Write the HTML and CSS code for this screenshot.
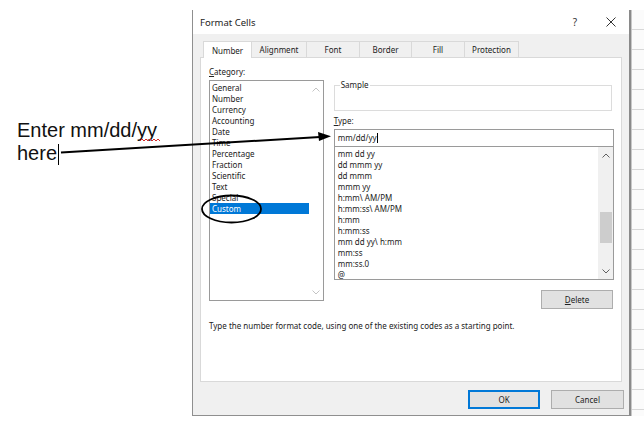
FILE: index.html
```html
<!DOCTYPE html>
<html lang="en">
  <head>
    <meta charset="UTF-8" />
    <title>Format Cells</title>
    <link rel="stylesheet" href="styles.css">
  </head>
  <body>
    <div class="screen">
      <div class="note">
        <p>Enter mm/dd/<span class="squiggle">yy</span><br />here<span class="caret"></span></p>
      </div>

      <div class="dialog">
        <div class="titlebar">
          <span class="title">Format Cells</span>
          <span class="help">?</span>
          <svg class="close" width="10" height="10" viewBox="0 0 10 10">
            <path d="M0.5 0.5 L9.5 9.5 M9.5 0.5 L0.5 9.5" stroke="#333" stroke-width="1" fill="none" />
          </svg>
        </div>

        <div class="body">
          <div class="tabs">
            <div class="tab active">Number</div>
            <div class="tab">Alignment</div>
            <div class="tab">Font</div>
            <div class="tab">Border</div>
            <div class="tab">Fill</div>
            <div class="tab">Protection</div>
          </div>

          <div class="panel">
            <div class="columns">
              <div class="cat-col">
                <div class="label"><u>C</u>ategory:</div>
                <div class="listbox cat-list">
                  <ul>
                    <li>General</li>
                    <li>Number</li>
                    <li>Currency</li>
                    <li>Accounting</li>
                    <li>Date</li>
                    <li>Time</li>
                    <li>Percentage</li>
                    <li>Fraction</li>
                    <li>Scientific</li>
                    <li>Text</li>
                    <li>Special</li>
                    <li class="selected">Custom</li>
                  </ul>
                  <div class="scroll plain">
                    <svg width="8" height="5" viewBox="0 0 8 5"><path d="M0.5 4.5 L4 1 L7.5 4.5" stroke="#c4c4c4" fill="none" /></svg>
                    <svg width="8" height="5" viewBox="0 0 8 5"><path d="M0.5 0.5 L4 4 L7.5 0.5" stroke="#c4c4c4" fill="none" /></svg>
                  </div>
                </div>
              </div>

              <div class="type-col">
                <div class="sample">
                  <span class="legend">Sample</span>
                </div>
                <div class="label"><u>T</u>ype:</div>
                <div class="type-input">mm/dd/yy<span class="text-caret"></span></div>
                <div class="listbox type-list">
                  <ul>
                    <li>mm dd yy</li>
                    <li>dd mmm yy</li>
                    <li>dd mmm</li>
                    <li>mmm yy</li>
                    <li>h:mm\ AM/PM</li>
                    <li>h:mm:ss\ AM/PM</li>
                    <li>h:mm</li>
                    <li>h:mm:ss</li>
                    <li>mm dd yy\ h:mm</li>
                    <li>mm:ss</li>
                    <li>mm:ss.0</li>
                    <li>@</li>
                  </ul>
                  <div class="scroll">
                    <div class="arrow">
                      <svg width="8" height="5" viewBox="0 0 8 5"><path d="M0.5 4.5 L4 1 L7.5 4.5" stroke="#606060" fill="none" /></svg>
                    </div>
                    <div class="track"><div class="thumb"></div></div>
                    <div class="arrow">
                      <svg width="8" height="5" viewBox="0 0 8 5"><path d="M0.5 0.5 L4 4 L7.5 0.5" stroke="#606060" fill="none" /></svg>
                    </div>
                  </div>
                </div>
                <div class="actions">
                  <button class="btn"><u>D</u>elete</button>
                </div>
              </div>
            </div>
            <p class="hint">Type the number format code, using one of the existing codes as a starting point.</p>
          </div>

          <div class="footer">
            <button class="btn primary">OK</button>
            <button class="btn">Cancel</button>
          </div>
        </div>
      </div>

      <div class="sheet"></div>

      <!-- hand-drawn annotations on top of the screenshot -->
      <svg class="marks" width="644" height="431" viewBox="0 0 644 431">
        <path d="M140 141 l2 -2 l2 2 l2 -2 l2 2 l2 -2 l2 2 l2 -2 l2 2 l2 -2 l2 2" stroke="#d42a2a" stroke-width="1" fill="none" />
        <line x1="61" y1="152.5" x2="320" y2="137" stroke="#000" stroke-width="2" />
        <path d="M331 136.3 L318 132 L319 141 Z" fill="#000" />
        <ellipse cx="231.5" cy="209" rx="29.5" ry="13.5" stroke="#000" stroke-width="1.8" fill="none" />
      </svg>
    </div>
  </body>
</html>
```

FILE: styles.css
```css
* {
  box-sizing: border-box;
}

body {
  margin: 0;
  background: #fff;
  font-family: "Noto Sans", "Open Sans", sans-serif;
  font-size: 8px;
  color: #222;
}

.screen {
  position: relative;
  display: flex;
  width: 644px;
  height: 431px;
  overflow: hidden;
}

/* left note */
.note {
  width: 192px;
  padding: 119px 0 0 17px;
}

.note p {
  margin: 0;
  font-family: "Liberation Sans", Arial, sans-serif;
  font-size: 20px;
  line-height: 23px;
  color: #111;
}

.caret {
  display: inline-block;
  width: 1px;
  height: 21px;
  margin-left: 1px;
  vertical-align: -5px;
  background: #000;
}

/* dialog */
.dialog {
  display: flex;
  flex-direction: column;
  width: 439px;
  height: 406px;
  margin-top: 10px;
  border-left: 1px solid #8f8f8f;
  border-right: 2px solid #8a8a8a;
  border-bottom: 1px solid #8f8f8f;
  background: #f0f0f0;
}

.titlebar {
  display: flex;
  align-items: center;
  height: 24px;
  padding: 0 13px 0 7px;
  background: #fff;
  font-size: 9.5px;
  color: #222;
}

.title {
  flex: 1;
}

.help {
  margin-right: 29px;
  font-size: 10px;
  color: #333;
}

.body {
  flex: 1;
  display: flex;
  flex-direction: column;
  padding: 6px 7px 0 7px;
}

.tabs {
  display: flex;
  height: 17px;
  margin-left: 3px;
}

.tab {
  display: flex;
  align-items: center;
  justify-content: center;
  width: 54px;
  margin-top: 1px;
  border: 1px solid #d9d9d9;
  border-left: none;
  border-bottom: none;
  color: #222;
}

.tab.active {
  width: 49px;
  margin-top: 0;
  border-left: 1px solid #d9d9d9;
  background: #fff;
  position: relative;
  top: 1px;
}

.tab:nth-child(2) { width: 55px; }
.tab:nth-child(3) { width: 53px; }
.tab:nth-child(4) { width: 52px; }
.tab:nth-child(5) { width: 53px; }

.panel {
  height: 325px;
  padding: 8px 7px 0 8px;
  background: #fff;
  border: 1px solid #d9d9d9;
}

.columns {
  display: flex;
  gap: 10px;
}

.label {
  height: 12px;
  line-height: 12px;
  margin-bottom: 2px;
}

.cat-col {
  width: 115px;
}

.listbox {
  display: flex;
  border: 1px solid #9a9a9a;
  background: #fff;
}

.listbox ul {
  flex: 1;
  margin: 0;
  padding: 1px 0 0;
  list-style: none;
}

.listbox li {
  height: 11px;
  line-height: 11px;
  padding-left: 2px;
  white-space: nowrap;
}

.cat-list {
  height: 221px;
}

.cat-list li.selected {
  background: #0078d7;
  color: #fff;
}

.scroll {
  display: flex;
  flex-direction: column;
  width: 14px;
}

.scroll.plain {
  justify-content: space-between;
  align-items: center;
  padding: 6px 0 5px;
}

.type-col {
  width: 281px;
}

.sample {
  position: relative;
  height: 26px;
  margin: 19px 2px 4px 0;
  border: 1px solid #dcdcdc;
}

.legend {
  position: absolute;
  top: -7px;
  left: 5px;
  padding: 0 1px;
  background: #fff;
  line-height: 12px;
}

.type-input {
  height: 17px;
  padding-left: 3px;
  line-height: 15px;
  border: 1px solid #9a9a9a;
  border-bottom: none;
}

.text-caret {
  display: inline-block;
  width: 1px;
  height: 10px;
  vertical-align: -2px;
  background: #000;
}

.type-list {
  height: 134px;
}

.type-list ul {
  padding-left: 1px;
}

.type-list .scroll {
  width: 15px;
  background: #f0f0f0;
}

.arrow {
  display: flex;
  align-items: center;
  justify-content: center;
  height: 16px;
}

.track {
  flex: 1;
  padding: 49px 1px 0 2px;
}

.thumb {
  height: 31px;
  background: #cdcdcd;
}

.actions {
  display: flex;
  justify-content: flex-end;
  margin: 10px 1px 0 0;
}

.btn {
  width: 72px;
  height: 19px;
  padding: 0;
  border: 1px solid #adadad;
  background: #e1e1e1;
  font-family: inherit;
  font-size: 8px;
  color: #222;
}

.hint {
  margin: 11px 0 0 0;
  line-height: 11px;
}

.footer {
  display: flex;
  justify-content: flex-end;
  gap: 11px;
  margin-right: -2px;
  padding-top: 8px;
}

.footer .btn {
  width: 73px;
}

.btn.primary {
  width: 72px;
  border: 1px solid #0078d7;
  box-shadow: inset 0 0 0 1px #0078d7;
}

/* spreadsheet peeking out on the right */
.sheet {
  flex: 1;
  margin-top: 10px;
  height: 406px;
  border-left: 1px solid #c8c8c8;
  background: repeating-linear-gradient(#fbfbfb 0 19px, #d8d8d8 19px 20px);
}

.marks {
  position: absolute;
  left: 0;
  top: 0;
  pointer-events: none;
}
```
